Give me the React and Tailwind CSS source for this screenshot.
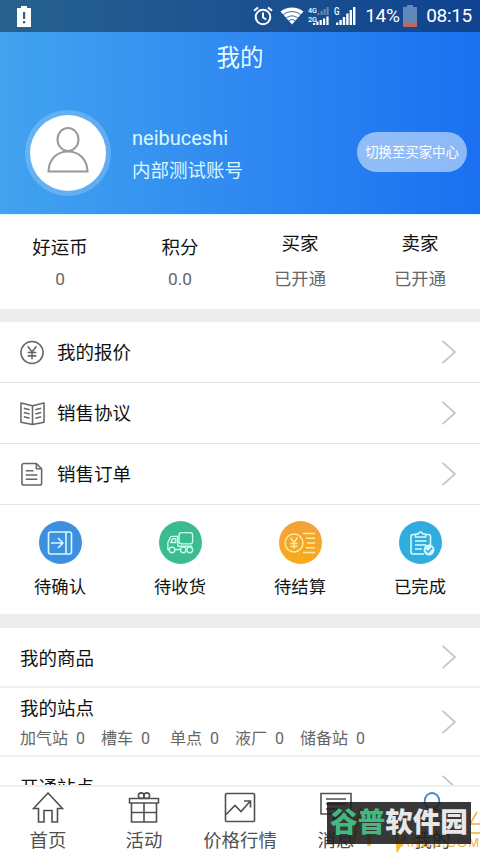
const stats = [
  { label: "好运币", value: "0", pad: "pt-[21px]", gap: "mt-[7px]" },
  { label: "积分", value: "0.0", pad: "pt-[21px]", gap: "mt-[7px]" },
  { label: "买家", value: "已开通", pad: "pt-[17px]", gap: "mt-[11px]" },
  { label: "卖家", value: "已开通", pad: "pt-[17px]", gap: "mt-[11px]" },
];

const stations = [
  { name: "加气站", count: 0, width: "w-[81px]" },
  { name: "槽车", count: 0, width: "w-[69px]" },
  { name: "单点", count: 0, width: "w-[65px]" },
  { name: "液厂", count: 0, width: "w-[65px]" },
  { name: "储备站", count: 0, width: "w-[81px]" },
];

function Icon({ className, viewBox = "0 0 26 26", width = 1.6, children }) {
  return (
    <svg
      className={className}
      viewBox={viewBox}
      fill="none"
      stroke="currentColor"
      strokeWidth={width}
      strokeLinejoin="round"
    >
      {children}
    </svg>
  );
}

function Chevron() {
  return (
    <svg className="h-6 w-4 shrink-0 text-[#c4c4c6]" viewBox="0 0 16 24" fill="none" stroke="currentColor" strokeWidth="1.7">
      <path d="M1.5 0.8 L14 12 L1.5 23.2" />
    </svg>
  );
}

function StatusBar() {
  return (
    <div className="flex h-8 items-center bg-black/40 pl-[17px] pr-[8px] text-[19px] text-white">
      <svg className="h-[21px] w-[14px]" viewBox="0 0 14 21">
        <path d="M4 0h6v2h4v19H0V2h4z" fill="white" />
        <path d="M6 6h2.2v7H6zM6 15h2.2v2.2H6z" fill="#285f90" />
      </svg>
      <div className="ml-auto flex items-center">
        <Icon className="h-5 w-5" viewBox="0 0 20 20" width={2}>
          <circle cx="10" cy="11" r="7.3" />
          <path d="M10 6.5v5l3.2 2M1 4.8 5 1.5M19 4.8l-4-3.3" />
        </Icon>
        <svg className="ml-[7px] h-[18px] w-6" viewBox="0 0 24 18">
          <path d="M12 17.5 0.5 4.5C7-1 17-1 23.5 4.5z" fill="white" />
          <path d="M3 8c5-4.5 13-4.5 18 0M5.8 11.3c3.6-3.2 8.8-3.2 12.4 0M8.4 14c2.2-1.8 5-1.8 7.2 0" fill="none" stroke="#1b5698" strokeWidth="0.9" />
        </svg>
        <svg className="ml-[4px] h-5 w-[22px]" viewBox="0 0 22 20" fill="white">
          <text x="0" y="7" fontSize="8" fontWeight="500" fontFamily="Roboto" textLength="9" lengthAdjust="spacingAndGlyphs">4G</text>
          <text x="0" y="15.5" fontSize="8" fontWeight="500" fontFamily="Roboto" textLength="9" lengthAdjust="spacingAndGlyphs">2G</text>
          <path d="M9.5 9h2V7h-2zM12.6 9h2V5h-2zM15.6 9h2V3h-2zM18.6 9h2V1h-2z" opacity="0.35" />
          <path d="M5 19h2.200v-2H5zM8.300 19h2.200v-3.500H8.300zM11.600 19h2.200v-5h-2.200zM15 19h2.200v-6.500H15zM18.400 19h2.200v-8.500h-2.200z" />
        </svg>
        <svg className="ml-[4px] h-5 w-[22px]" viewBox="0 0 22 20" fill="white">
          <text x="0" y="8.5" fontSize="10" fontWeight="500" fontFamily="Roboto" textLength="5.5" lengthAdjust="spacingAndGlyphs">G</text>
          <path d="M2 19h2.400v-2.500H2zM5.400 19h2.400v-5H5.400zM8.800 19h2.400v-8H8.800zM12.200 19h2.400V7.500h-2.400zM15.600 19h2.400V4h-2.400zM19 19h2.400V1H19z" />
        </svg>
        <span className="ml-[9px] w-[36px] whitespace-nowrap text-[19px] tracking-[-0.3px]">14%</span>
        <svg className="ml-[2px] h-[22px] w-[14px]" viewBox="0 0 14 22">
          <path d="M4 0h6v2h4v20H0V2h4z" fill="#6288b9" />
          <path d="M0 17.5h14V22H0z" fill="#bd675f" />
        </svg>
        <span className="ml-[9px] tracking-[-0.3px]">08:15</span>
      </div>
    </div>
  );
}

function Profile() {
  return (
    <div className="flex h-[130px] items-start pl-[25px] pr-[13px]">
      <div className="mt-[26px] flex size-[86px] items-center justify-center rounded-full bg-white/20">
        <div className="flex size-[76px] items-center justify-center rounded-full bg-white">
          <svg className="-mt-[7px] h-[46px] w-[42px] text-[#999]" viewBox="0 0 42 46" fill="none" stroke="currentColor" strokeWidth="2">
            <ellipse cx="21" cy="12.5" rx="10.5" ry="11.5" />
            <path d="M1.5 44.5C2 32 10 24.5 21 24.5S40 32 40.5 44.5z" />
          </svg>
        </div>
      </div>
      <div className="ml-[21px] mt-[39px] text-[#dcf8ff]">
        <div className="text-[20px] leading-[30px]">neibuceshi</div>
        <div className="mt-[3px] text-[18.5px] leading-[30px]">内部测试账号</div>
      </div>
      <button className="ml-auto mt-[48px] h-10 w-[110px] whitespace-nowrap rounded-full bg-white/50 pt-[2px] text-[13.4px] text-white">
        切换至买家中心
      </button>
    </div>
  );
}

function MenuRow({ icon, label }) {
  return (
    <div className="flex h-[61px] items-center border-b border-[#e4e4e4] pl-5 pr-[23px]">
      {icon}
      <span className="flex-1 pt-1 text-[18.5px]">{label}</span>
      <Chevron />
    </div>
  );
}

function Order({ color, label, children }) {
  return (
    <div className="flex flex-col items-center pt-4">
      <div className={`flex size-[43px] items-center justify-center rounded-full ${color}`}>{children}</div>
      <span className="mt-[10px] text-[17.3px] leading-[26px]">{label}</span>
    </div>
  );
}

function Tab({ label, children }) {
  return (
    <div className="flex flex-col items-center pt-[5px] text-[#505050]">
      {children}
      <span className="mt-[5px] text-[18.4px] leading-6">{label}</span>
    </div>
  );
}

// site stamp in the bottom right corner, sits over the tab bar
function Watermark() {
  return (
    <div className="absolute bottom-[9px] left-[327px] h-[42px] w-[153px]">
      <svg className="absolute left-0 top-0 h-[51px] w-[153px]" viewBox="0 0 153 51">
        <path d="M150 10l-7 12h10M144 31h9" fill="none" stroke="#f2ae3c" strokeWidth="1.5" />
        <path d="M34 6l-8 36M42 8v36M67 8l4 38 7-12" fill="none" stroke="#f5bd28" strokeWidth="3.5" />
        <text x="74" y="45" fontSize="13" fontFamily="Liberation Sans" fill="#efb04d" textLength="78">ANDS.COM</text>
      </svg>
      <div className="absolute left-0 top-0 flex h-[42px] w-[144px] items-center justify-center whitespace-nowrap bg-[#1d1d1d]/88 pb-px text-[27.5px] font-black text-[#e8e8e8]">
        <span className="text-[#42b883]">谷普</span>软件园
      </div>
    </div>
  );
}

export default function App() {
  return (
    <div className="relative flex h-[853px] w-[480px] flex-col overflow-hidden bg-white font-[Roboto,'Noto_Sans_CJK_SC',sans-serif] text-[#111]">
      <header className="h-[214px] shrink-0 bg-linear-to-r from-[#42a3ef] via-[#3089f1] to-[#1a70f0]">
        <StatusBar />
        <h1 className="h-[52px] pt-px text-center text-[23.5px] leading-[50px] text-[#e4fbff]">我的</h1>
        <Profile />
      </header>

      <section className="grid h-[95px] shrink-0 grid-cols-4 border-t border-[#dcf8ff] text-center">
        {stats.map((item) => (
          <div key={item.label} className={item.pad}>
            <div className="text-[18.5px] leading-6">{item.label}</div>
            <div className={`${item.gap} text-[17.3px] leading-6 text-[#666]`}>{item.value}</div>
          </div>
        ))}
      </section>

      <div className="h-[13px] shrink-0 bg-[#ededed]" />

      <section className="shrink-0">
        <MenuRow
          label="我的报价"
          icon={
            <Icon className="mr-3 size-[25px] text-[#666]">
              <circle cx="12.5" cy="13" r="11.5" />
              <path d="M8 6.5l4.500 6 4.500-6M12.500 12.500V20M8 13h9M8 16.500h9" />
            </Icon>
          }
        />
        <MenuRow
          label="销售协议"
          icon={
            <Icon className="mr-3 size-[25px] text-[#666]">
              <path d="M13 5 1 2v20l12 2.500L25 22V2zM13 5v19.500M4 7.500l6 1.500M4 12l6 1.500M4 16.500l6 1.500M22 7.500 16 9M22 12l-6 1.500M22 16.500 16 18" />
            </Icon>
          }
        />
        <MenuRow
          label="销售订单"
          icon={
            <Icon className="mr-3 size-[25px] text-[#666]">
              <path d="M4 1.500h13l5.500 5.500V22a2 2 0 0 1-2 2H4a2 2 0 0 1-2-2V3.500a2 2 0 0 1 2-2zM17 1.500V7h5.500M6 9h8M6 13.500h12M6 18h12" />
            </Icon>
          }
        />
      </section>

      <section className="grid h-[109px] shrink-0 grid-cols-4">
        <Order color="bg-[#3e8fdf]" label="待确认">
          <Icon className="size-[26px] text-[#d5fbff]">
            <rect x="1.5" y="2" width="23" height="22" rx="2" />
            <path d="M19 2v22M4 13h12M11 8l5 5-5 5" />
          </Icon>
        </Order>
        <Order color="bg-[#3cbb91]" label="待收货">
          <Icon className="h-[25px] w-[28px] text-[#c9ffed]" viewBox="0 0 30 25" width={1.4}>
            <rect x="14" y="2" width="14.5" height="12" rx="2.5" />
            <path d="M12.500 16V6H6.500Q5 6 4.500 7.500L2 12.500V20h1.500M9.500 20h6M12.500 16.500h15V18M5 12.500l2-4h3.500v4z" />
            <circle cx="6.5" cy="20.5" r="3" />
            <circle cx="18.5" cy="20.5" r="3" />
            <circle cx="25.5" cy="20.5" r="3" />
          </Icon>
        </Order>
        <Order color="bg-linear-to-b from-[#f2a23a] to-[#f7ab12]" label="待结算">
          <Icon className="h-[22px] w-[32px] text-[#ffeca3]" viewBox="0 0 32 22" width={1.4}>
            <circle cx="10" cy="11" r="9" />
            <path d="M6.500 5.500 10 10.500l3.500-5M10 10.500V17M6.500 11.500h7M6.500 14.500h7M19 1.500h12M22 6.200h9M23 11h8M22 15.800h9M19 20.500h12" />
          </Icon>
        </Order>
        <Order color="bg-[#31acdf]" label="已完成">
          <Icon className="ml-[3px] h-[26px] w-[26px] text-[#d5fbff]">
            <path d="M6 4.500H4a2 2 0 0 0-2 2V22a2 2 0 0 0 2 2h11M17 4.500h2.500a2 2 0 0 1 2 2V15M6.500 7V4h2.700a2.400 2.400 0 0 1 4.700 0h2.800v3zM6 11h11.500M6 15h11.500M6 19h7" />
            <circle cx="20" cy="20" r="5.5" fill="#d5f7ff" stroke="none" />
            <path d="m17 20 2.200 2.300 4-4.600" stroke="#31acdf" />
          </Icon>
        </Order>
      </section>

      <div className="h-[14px] shrink-0 bg-[#ededed]" />

      <section className="min-h-0 flex-1 overflow-hidden">
        <div className="flex h-[60px] items-center justify-between border-b-2 border-[#f0f0f0] pl-5 pr-[23px]">
          <span className="pt-1.5 text-[18.5px]">我的商品</span>
          <Chevron />
        </div>
        <div className="flex h-[69px] items-center justify-between border-b-2 border-[#f0f0f0] pl-5 pr-[23px]">
          <div className="pt-1">
            <div className="text-[18.5px] leading-[30px]">我的站点</div>
            <div className="flex text-[16px] leading-[30px] text-[#666]">
              {stations.map((item) => (
                <span key={item.name} className={`${item.width} shrink-0 whitespace-nowrap`}>
                  {item.name}
                  <span className="ml-2">{item.count}</span>
                </span>
              ))}
            </div>
          </div>
          <Chevron />
        </div>
        <div className="flex h-[60px] items-center justify-between pl-5 pr-[23px]">
          <span className="pt-1 text-[18.5px]">开通站点</span>
          <Chevron />
        </div>
      </section>

      <nav className="grid h-[68px] shrink-0 grid-cols-5 border-t-2 border-[#efefef] bg-white">
        <Tab label="首页">
          <Icon className="h-8 w-8" viewBox="0 0 32 32">
            <path d="M16 1 1.500 16.500H6.500V30H12V18.500H20V30h5.500V16.500h5z" strokeLinejoin="miter" />
          </Icon>
        </Tab>
        <Tab label="活动">
          <Icon className="h-8 w-8" viewBox="0 0 32 32">
            <path d="M1.500 6.500h29V11h-29zM3.500 11h25v19h-25zM16 11V30M3.500 20.500h25" />
            <circle cx="13.2" cy="3.7" r="2.8" />
            <circle cx="18.8" cy="3.7" r="2.8" />
          </Icon>
        </Tab>
        <Tab label="价格行情">
          <Icon className="h-8 w-8" viewBox="0 0 32 32">
            <rect x="1.5" y="1.5" width="29" height="28" rx="1" />
            <path d="m2 22.500 9-9 6 6 9-10M20 9h6.500v6.500" strokeLinejoin="miter" />
          </Icon>
        </Tab>
        <Tab label="消息">
          <Icon className="h-8 w-8" viewBox="0 0 32 32">
            <path d="M1 1.500h30V22H19l-5 5v-5H1zM6 7h20M6 12h20M6 17h12" strokeLinejoin="miter" />
          </Icon>
        </Tab>
        <Tab label="我的">
          <Icon className="h-8 w-8 text-[#3c8bd0]" viewBox="0 0 32 32" width={1.8}>
            <ellipse cx="16" cy="9" rx="7.3" ry="8" />
            <path d="M2 30c1-8 6-13 14-13S29 22 30 30z" />
          </Icon>
        </Tab>
      </nav>

      <Watermark />
    </div>
  );
}
